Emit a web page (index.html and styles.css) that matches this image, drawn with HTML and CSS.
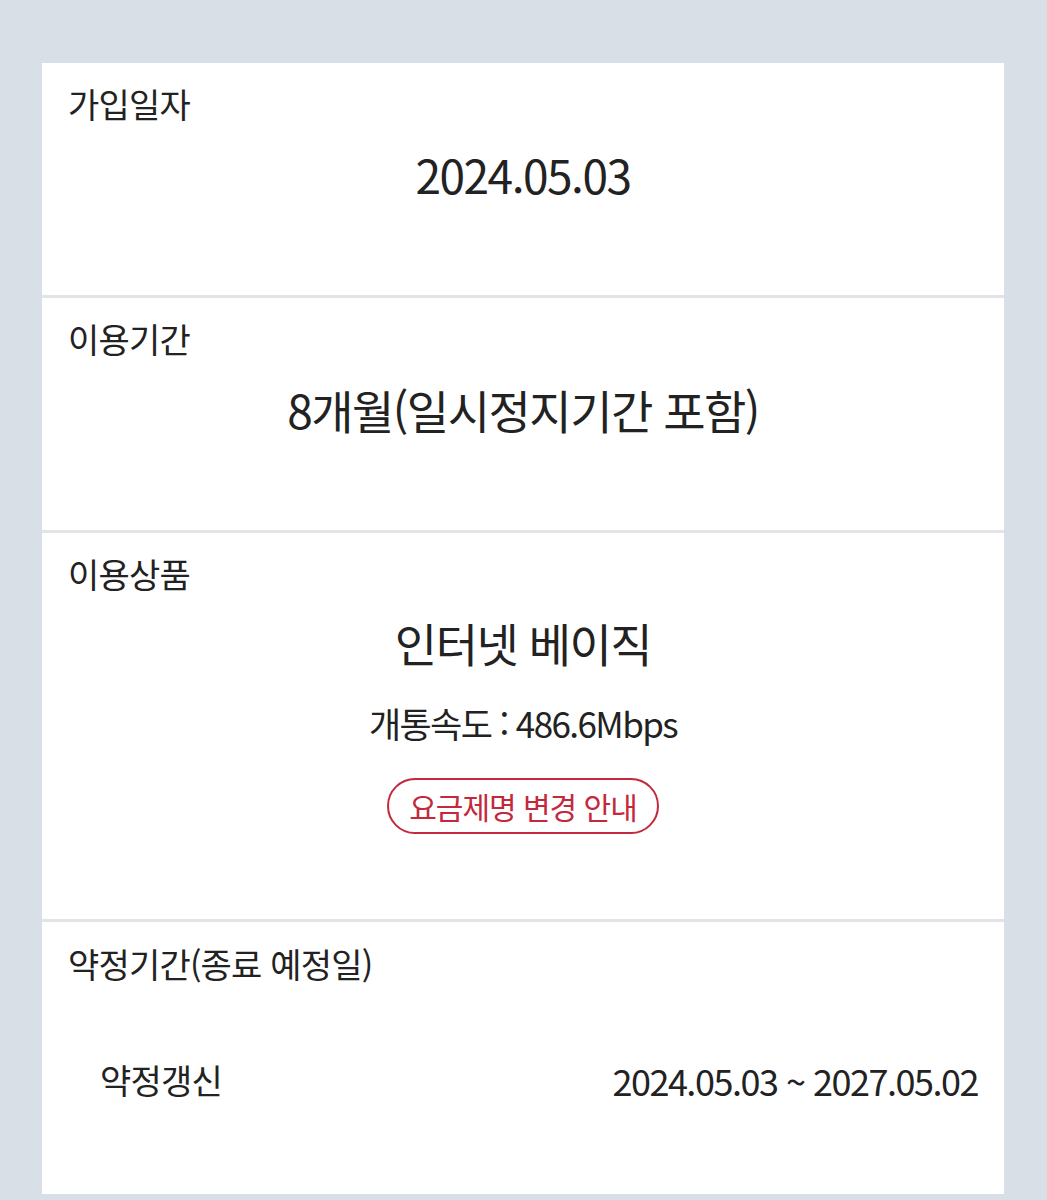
FILE: index.html
```html
<!DOCTYPE html>
<html lang="ko">
  <head>
    <meta charset="UTF-8" />
    <meta name="viewport" content="width=device-width, initial-scale=1.0" />
    <title>가입 정보</title>
    <link rel="stylesheet" href="styles.css">
  </head>
  <body>
    <div class="container">
      <div class="section">
        <div class="label">가입일자</div>
        <div class="value">2024.05.03</div>
      </div>
      <div class="section">
        <div class="label">이용기간</div>
        <div class="value">8개월(일시정지기간 포함)</div>
      </div>
      <div class="section product">
        <div class="label">이용상품</div>
        <div class="value">인터넷 베이직</div>
        <div class="speed">개통속도 : 486.6Mbps</div>
        <button class="notice-btn">요금제명 변경 안내</button>
      </div>
      <div class="section contract">
        <div class="label">약정기간(종료 예정일)</div>
        <div class="contract-row">
          <span>약정갱신</span>
          <span class="date">2024.05.03 ~ 2027.05.02</span>
        </div>
      </div>
    </div>
  </body>
</html>
```

FILE: styles.css
```css
* {
  box-sizing: border-box;
  margin: 0;
  padding: 0;
}
body {
  font-family: "Noto Sans CJK KR", "Noto Sans", sans-serif;
  background: #d9dfe6;
  color: #222;
}
.container {
  margin: 63px 43px 0 42px;
  display: flex;
  flex-direction: column;
  gap: 3px;
  background: #e2e4e7;
}
.section {
  background: #fff;
  padding: 20px 26px 93px;
}
.label {
  font-size: 34px;
  line-height: 42px;
  letter-spacing: -0.8px;
}
.value {
  text-align: center;
  font-size: 46px;
  line-height: 56px;
  letter-spacing: -1.5px;
  margin-top: 21px;
}
.product {
  padding-bottom: 85px;
  display: flex;
  flex-direction: column;
}
.product .value {
  margin-top: 19px;
}
.speed {
  text-align: center;
  font-size: 35px;
  line-height: 44px;
  letter-spacing: -1.6px;
  margin-top: 31px;
}
.notice-btn {
  align-self: center;
  margin-top: 33px;
  height: 56px;
  padding: 0 20px;
  border: 2px solid #c3283c;
  border-radius: 28px;
  background: #fff;
  color: #c3283c;
  font-family: inherit;
  font-size: 30px;
  letter-spacing: -1px;
}
.contract {
  padding-top: 21px;
  padding-bottom: 92px;
}
.contract-row {
  display: flex;
  justify-content: space-between;
  align-items: center;
  padding: 0 0 0 32px;
  margin-top: 73px;
  font-size: 34px;
  line-height: 44px;
  letter-spacing: -0.8px;
}
.contract-row .date {
  font-size: 36px;
  letter-spacing: -1.5px;
}
```
